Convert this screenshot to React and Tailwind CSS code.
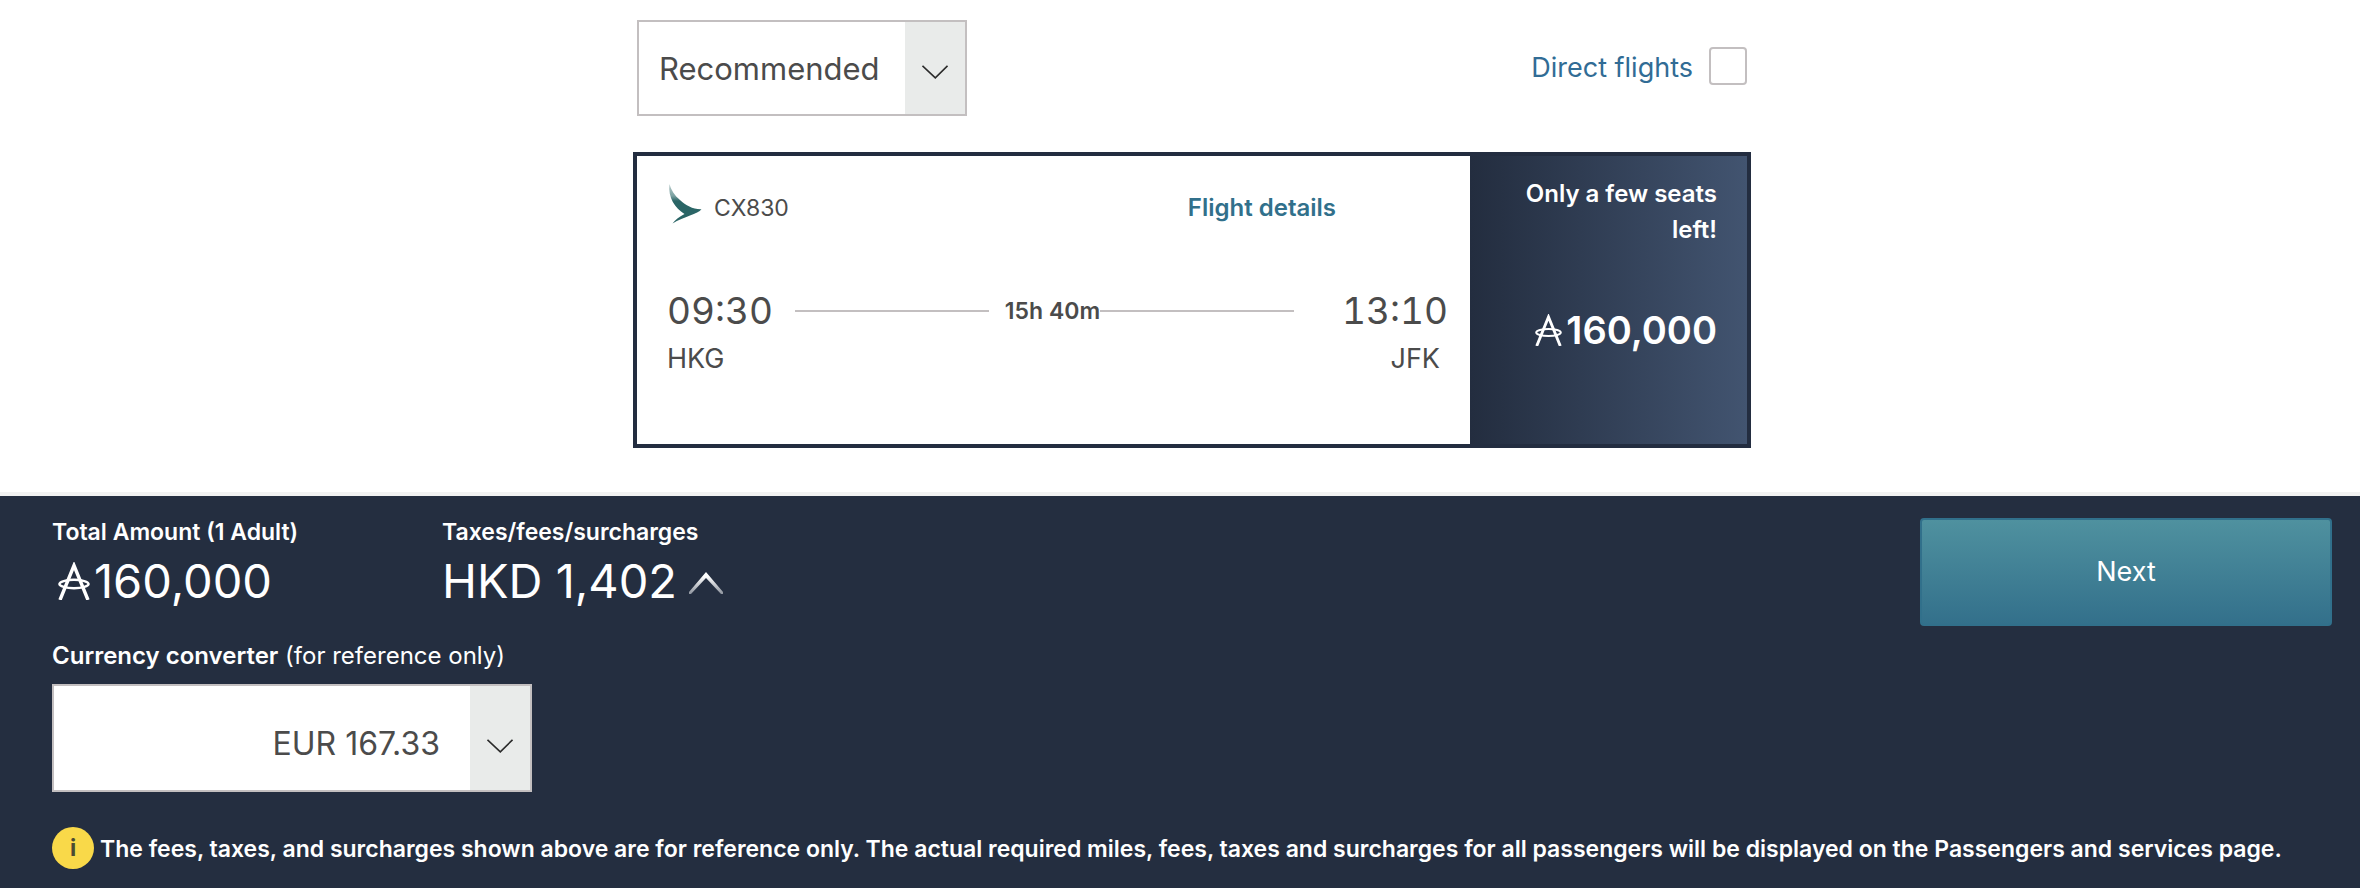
import React, { useState } from 'react';

const Chevron = () => (
  <svg viewBox="0 0 26 14" className="h-[14px] w-[26px]" fill="none" stroke="#2b2b2b" strokeWidth="1.6">
    <path d="M0.5 0.8 L13.3 12.8 L25.5 0.8" />
  </svg>
);

const MilesIcon = ({ className }) => (
  <svg viewBox="0 0 32 38" className={className} fill="none" stroke="white" aria-hidden="true">
    <path d="M2 38 L16 3.5 L30 38" strokeWidth="3.4" />
    <ellipse cx="16" cy="22" rx="14.6" ry="4.2" strokeWidth="2.4" />
  </svg>
);

const AirlineLogo = () => (
  <svg viewBox="-2 0 35 40" className="h-10 w-[35px]" aria-hidden="true">
    <defs>
      <linearGradient id="wing" x1="0" y1="0" x2="0" y2="17" gradientUnits="userSpaceOnUse">
        <stop offset="0" stopColor="#b9cccc" />
        <stop offset="0.7" stopColor="#7ba1a1" />
        <stop offset="1" stopColor="#2a6566" />
      </linearGradient>
    </defs>
    <path
      d="M0.4 0 C2 5.5 5.5 11.5 11 16 C17 21.5 24 25.5 32.5 25.2 C29 30 15 32.5 3.5 39.5 C6 36 10 33 15.5 30 C6 24 -1 14 0.4 0 Z"
      fill="url(#wing)"
    />
  </svg>
);

const FlightCard = () => (
  <div className="flex h-[296px] border-4 border-[#232d40]">
    <div className="flex-1 pl-[30px] pr-[22px] pt-[26px]">
      <div className="flex items-center">
        <AirlineLogo />
        <span className="ml-3 pt-2 text-[23px] leading-9">CX830</span>
        <a href="#details" className="ml-auto mr-28 pt-2 text-[24px] leading-9 font-semibold text-[#31708b]">
          Flight details
        </a>
      </div>
      <div className="mt-[61px] flex items-center text-[37px] leading-[48px]">
        <span className="tabular-nums">09:30</span>
        <div className="ml-[22px] mr-12 flex flex-1 items-center">
          <span className="h-[2px] flex-1 bg-[#c3bfc0]" />
          <span className="ml-4 text-[23px] leading-9 font-semibold">15h 40m</span>
          <span className="h-[2px] flex-1 bg-[#c3bfc0]" />
        </div>
        <span className="tabular-nums">13:10</span>
      </div>
      <div className="flex justify-between pr-2 text-[27px] leading-[48px]">
        <span>HKG</span>
        <span>JFK</span>
      </div>
    </div>
    <div className="flex w-[277px] flex-col bg-linear-to-r from-[#232d3f] to-[#425470] pl-6 pr-[30px] pt-5 text-right font-semibold text-white">
      <p className="text-[24px] leading-9">Only a few seats left!</p>
      <p className="mt-[58px] flex items-center justify-end gap-1 text-[38px] leading-[48px]">
        <MilesIcon className="h-8 w-[27px]" />
        160,000
      </p>
    </div>
  </div>
);

const App = () => {
  const [sort, setSort] = useState('recommended');
  const [direct, setDirect] = useState(false);
  const [currency, setCurrency] = useState('eur');

  return (
    <div className="bg-white font-['Inter','Liberation_Sans',sans-serif] text-[#4b4b4b]">
      <main className="mx-auto w-full max-w-[1142px] pb-11 pl-6 pt-5">
        <div className="mb-9 flex items-start justify-between pl-1 pr-1">
          <div className="relative">
            <select
              aria-label="Sort flights"
              value={sort}
              onChange={(e) => setSort(e.target.value)}
              className="h-24 w-[330px] appearance-none border-2 border-[#c3bfc0] bg-white pl-5 pr-[62px] pt-0.5 text-[31px]"
            >
              <option value="recommended">Recommended</option>
            </select>
            <span className="pointer-events-none absolute inset-y-[2px] right-[2px] flex w-[60px] items-center justify-center bg-[#e9ebea] pt-2">
              <Chevron />
            </span>
          </div>
          <label className="mt-[26px] flex items-center gap-4 text-[27px] leading-9 text-[#316c95]">
            <span className="pt-1">Direct flights</span>
            <input
              type="checkbox"
              checked={direct}
              onChange={(e) => setDirect(e.target.checked)}
              className="size-[38px] appearance-none rounded-sm border-2 border-[#c3bfc0] bg-white checked:bg-[#31708b]"
            />
          </label>
        </div>
        <FlightCard />
      </main>

      <footer className="border-t-4 border-[#f2f2f2] bg-[#242e40] pb-5 pl-[52px] pr-7 text-white">
        <div className="flex items-start pt-[22px]">
          <div className="w-[390px]">
            <p className="text-[23px] leading-7 font-semibold">Total Amount (1 Adult)</p>
            <p className="mt-1 flex items-center gap-1 pl-1.5 text-[47px] leading-[62px]">
              <MilesIcon className="h-[38px] w-8" />
              160,000
            </p>
          </div>
          <div>
            <p className="text-[23px] leading-7 font-semibold">Taxes/fees/surcharges</p>
            <button className="mt-1 flex items-center gap-3 text-[47px] leading-[62px]">
              HKD 1,402
              <svg viewBox="0 0 34 22" className="mt-1 h-[22px] w-[34px]">
                <defs>
                  <linearGradient id="caret" x1="0" y1="0" x2="0" y2="1">
                    <stop offset="0.2" stopColor="#ffffff" />
                    <stop offset="1" stopColor="#8c929c" />
                  </linearGradient>
                </defs>
                <path d="M0 20 L17 0 L34 20 L34 22 L32 22 L17 6 L2 22 L0 22 Z" fill="url(#caret)" />
              </svg>
            </button>
          </div>
          <button className="ml-auto h-[108px] w-[412px] rounded-sm border-2 border-[#31708b] bg-linear-to-b from-[#4f919f] to-[#33708b] text-[27px]">
            Next
          </button>
        </div>
        <div className="mt-2 w-[480px]">
          <label htmlFor="currency" className="block pt-1 text-[24px] leading-9 whitespace-nowrap">
            <span className="font-semibold">Currency converter</span> (for reference only)
          </label>
          <div className="relative mt-[10px]">
            <select
              id="currency"
              value={currency}
              onChange={(e) => setCurrency(e.target.value)}
              className="h-[108px] w-full appearance-none border-2 border-[#c3bfc0] bg-white pr-[90px] pt-3 text-[32px] text-[#4b4b4b] [text-align-last:right]"
            >
              <option value="eur">EUR 167.33</option>
            </select>
            <span className="pointer-events-none absolute inset-y-[2px] right-[2px] flex w-[60px] items-center justify-center bg-[#e9ebea] pt-4">
              <Chevron />
            </span>
          </div>
        </div>
        <div className="mt-[35px] flex items-center gap-1.5">
          <span className="flex size-[42px] shrink-0 items-center justify-center rounded-full bg-[#f9d949] text-[23px] font-bold text-[#4b4b32]">
            i
          </span>
          <p className="pt-0.5 text-[23px] leading-8 font-semibold">
            The fees, taxes, and surcharges shown above are for reference only. The actual required miles, fees, taxes and surcharges for all passengers will be displayed on the Passengers and services page.
          </p>
        </div>
      </footer>
    </div>
  );
};

export default App;
